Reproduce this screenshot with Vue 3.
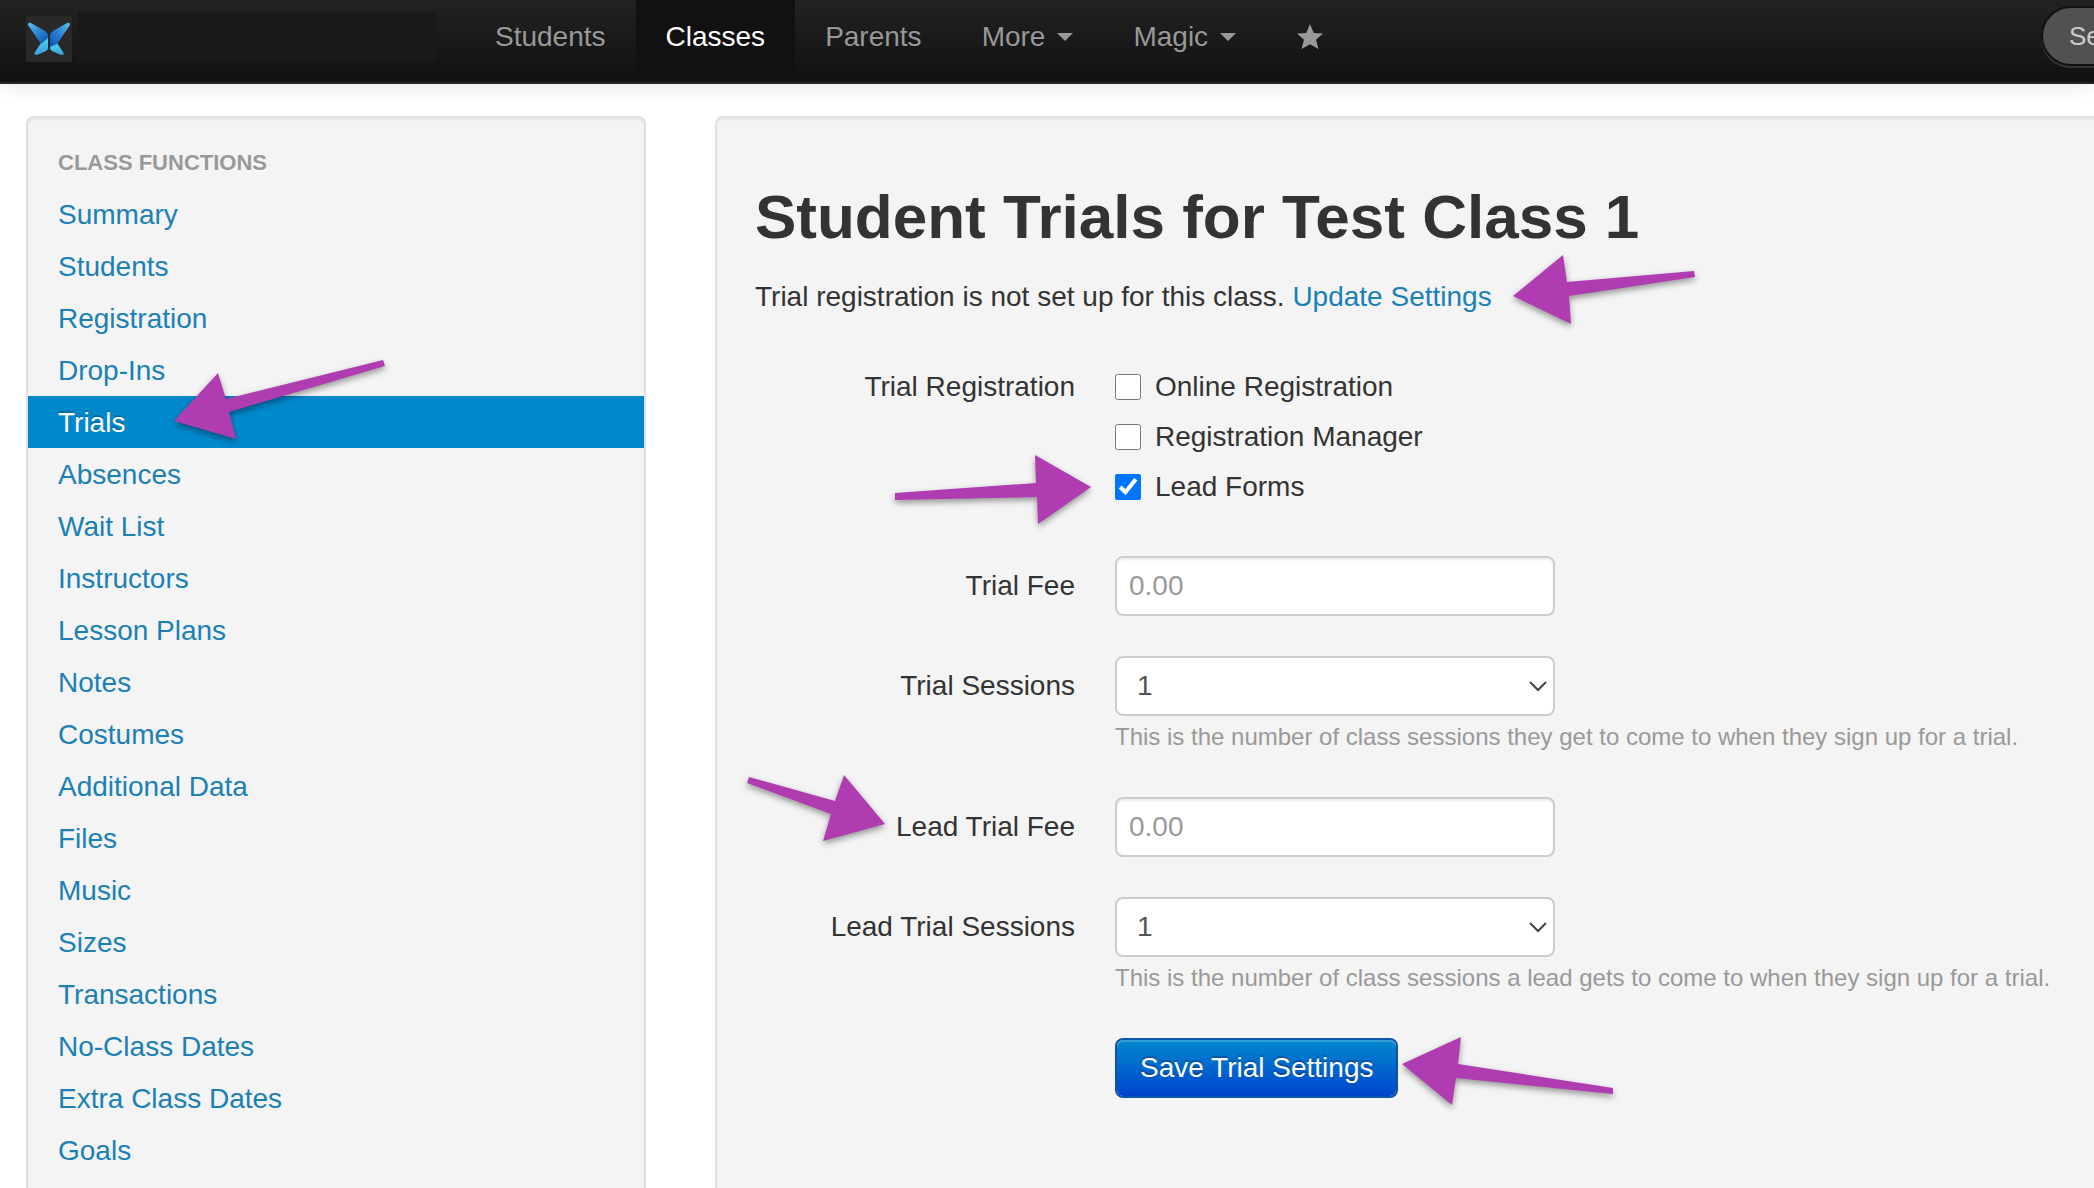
<template>
  <div class="page">
    <header class="navbar">
      <a class="brand" href="#" aria-label="Home">
        <svg class="logo" viewBox="0 0 46 46" aria-hidden="true">
          <defs>
            <linearGradient id="wing-l" x1="0" y1="0" x2="1" y2="1">
              <stop offset="0" stop-color="#5cc4ea" />
              <stop offset="0.5" stop-color="#2b82d0" />
              <stop offset="1" stop-color="#0a52b4" />
            </linearGradient>
            <linearGradient id="wing-r" x1="1" y1="0" x2="0" y2="1">
              <stop offset="0" stop-color="#5cc4ea" />
              <stop offset="0.5" stop-color="#2b82d0" />
              <stop offset="1" stop-color="#0a52b4" />
            </linearGradient>
            <linearGradient id="wing-b" x1="0" y1="0" x2="0" y2="1">
              <stop offset="0" stop-color="#4fd8ee" />
              <stop offset="1" stop-color="#3a9fdc" />
            </linearGradient>
          </defs>
          <path fill="url(#wing-b)" d="M22 21 L22 32 Q22 34 20 35 L11 39 Q7 39 9 36 L15 27 Z" />
          <path fill="url(#wing-b)" d="M31 27 L37 36 Q39 39 35 39 L26 35 Q24 34 24 32 L24 30 Z" />
          <path fill="url(#wing-l)" d="M2 9 Q2 6 5 7 L19 15 Q22 17 22 19 L22 22 L15 28 Z" />
          <path fill="url(#wing-r)" d="M44 9 Q44 6 41 7 L27 15 Q24 17 24 19 L24 31 L31 28 Z" />
        </svg>
        <span class="brand-name"></span>
      </a>
      <nav class="nav">
        <a
          v-for="link in navLinks"
          :key="link.label"
          href="#"
          :class="{ active: link.active }"
        >
          {{ link.label }}<span v-if="link.menu" class="caret"></span>
        </a>
        <a href="#" aria-label="Favorites">
          <svg class="star" viewBox="0 0 28 28" aria-hidden="true">
            <path
              d="M14 1 L17.8 10 L27 10.6 L20 16.8 L22.5 26 L14 21.2 L5.5 26 L8 16.8 L1 10.6 L10.2 10 Z"
            />
          </svg>
        </a>
      </nav>
      <input class="search" type="text" placeholder="Search" aria-label="Search" />
    </header>

    <div class="content">
      <aside class="well sidebar">
        <div class="nav-header">Class Functions</div>
        <a
          v-for="item in functions"
          :key="item"
          href="#"
          :class="{ active: item === 'Trials' }"
          >{{ item }}</a
        >
      </aside>

      <main class="well main">
        <h1>Student Trials for Test Class 1</h1>
        <p>
          Trial registration is not set up for this class.
          <a href="#">Update Settings</a>
        </p>
        <form @submit.prevent>
          <div class="group" role="group" aria-labelledby="registration">
            <span id="registration" class="label">Trial Registration</span>
            <div class="checks">
              <label v-for="opt in registration" :key="opt.label">
                <input v-model="opt.checked" type="checkbox" />
                {{ opt.label }}
              </label>
            </div>
          </div>
          <div v-for="field in fields" :key="field.id" class="group">
            <label class="label" :for="field.id">{{ field.label }}</label>
            <div v-if="field.help">
              <div class="select">
                <select :id="field.id">
                  <option v-for="n in 5" :key="n">{{ n }}</option>
                </select>
                <svg viewBox="0 0 20 12" aria-hidden="true">
                  <path d="M2 2 L10 10 L18 2" />
                </svg>
              </div>
              <div class="help">{{ field.help }}</div>
            </div>
            <input v-else :id="field.id" class="text" type="text" placeholder="0.00" />
          </div>
          <div class="group">
            <span></span>
            <button type="submit">Save Trial Settings</button>
          </div>
        </form>
      </main>
    </div>

    <svg class="arrows" width="2094" height="1188" aria-hidden="true">
      <polygon v-for="points in arrows" :key="points" :points="points" />
    </svg>
  </div>
</template>

<script setup>
import { ref } from "vue";

const navLinks = [
  { label: "Students" },
  { label: "Classes", active: true },
  { label: "Parents" },
  { label: "More", menu: true },
  { label: "Magic", menu: true },
];

const functions = [
  "Summary",
  "Students",
  "Registration",
  "Drop-Ins",
  "Trials",
  "Absences",
  "Wait List",
  "Instructors",
  "Lesson Plans",
  "Notes",
  "Costumes",
  "Additional Data",
  "Files",
  "Music",
  "Sizes",
  "Transactions",
  "No-Class Dates",
  "Extra Class Dates",
  "Goals",
];

const registration = ref([
  { label: "Online Registration", checked: false },
  { label: "Registration Manager", checked: false },
  { label: "Lead Forms", checked: true },
]);

const fields = [
  { id: "trial-fee", label: "Trial Fee" },
  {
    id: "trial-sessions",
    label: "Trial Sessions",
    help: "This is the number of class sessions they get to come to when they sign up for a trial.",
  },
  { id: "lead-trial-fee", label: "Lead Trial Fee" },
  {
    id: "lead-trial-sessions",
    label: "Lead Trial Sessions",
    help: "This is the number of class sessions a lead gets to come to when they sign up for a trial.",
  },
];

const arrows = [
  "174,421 218,373 226,399 383,360 385,366 229,412 236,439",
  "1513,296 1563,255 1567,282 1694,271 1695,277 1569,296 1571,324",
  "1091,487 1035,455 1036,483 895,493 895,500 1037,497 1038,524",
  "885,824 844,775 835,801 749,777 747,783 831,814 823,841",
  "1402,1064 1461,1037 1458,1064 1613,1088 1613,1094 1456,1078 1452,1105",
];
</script>

<style>
body {
  margin: 0;
}
</style>

<style scoped>
* {
  box-sizing: border-box;
}

.page {
  position: relative;
  height: 100vh;
  overflow: hidden;
  background: #fff;
  color: #333;
  font: 28px/40px "Liberation Sans", Arial, sans-serif;
}

a {
  color: #1a80b6;
  text-decoration: none;
}

input,
select,
button {
  margin: 0;
  font: inherit;
}

.navbar {
  display: flex;
  align-items: flex-start;
  height: 84px;
  padding-left: 26px;
  background: linear-gradient(#222, #111);
  border-bottom: 2px solid #252525;
  box-shadow: 0 2px 20px rgba(0, 0, 0, 0.1);
}

.brand {
  display: flex;
  gap: 6px;
  margin-right: 29px;
  padding-top: 12px;
}

.logo {
  width: 46px;
  height: 46px;
  margin-top: 4px;
  background: #292929;
}

.brand-name {
  width: 358px;
  height: 50px;
  background: #191919;
}

.nav {
  display: flex;
}

.nav a {
  display: flex;
  align-items: center;
  height: 80px;
  padding: 0 30px 6px;
  color: #999;
  text-shadow: 0 -1px 0 rgba(0, 0, 0, 0.25);
}

.nav a.active {
  background: #111;
  color: #fff;
}

.caret {
  margin-left: 12px;
  border: 8px solid transparent;
  border-top-color: #999;
  border-bottom: 0;
}

.star {
  width: 28px;
  height: 28px;
  fill: #999;
}

.search {
  flex: none;
  width: 400px;
  height: 60px;
  margin: 6px -347px 0 auto;
  padding: 0 26px;
  border: 2px solid #111;
  border-radius: 30px;
  background: #515151;
  box-shadow: 0 2px 0 rgba(255, 255, 255, 0.15);
  color: #fff;
  font-size: 26px;
}

.search::placeholder {
  color: #ccc;
}

.content {
  display: grid;
  grid-template-columns: 620px 1fr;
  gap: 69px;
  margin: 32px -20px 0 26px;
}

.well {
  min-height: 100vh;
  background: #f4f4f4;
  border: 2px solid #e0e0e0;
  border-radius: 8px;
  box-shadow: inset 0 2px 2px rgba(0, 0, 0, 0.05);
}

.sidebar {
  padding: 18px 0;
}

.sidebar a,
.nav-header {
  display: block;
  padding: 7px 30px 5px;
}

.nav-header {
  color: #999;
  font-size: 22px;
  font-weight: bold;
  text-transform: uppercase;
  text-shadow: 0 2px 0 rgba(255, 255, 255, 0.5);
}

.sidebar a.active {
  background: #0088cc;
  color: #fff;
  text-shadow: 0 -2px 0 rgba(0, 0, 0, 0.2);
}

.main {
  padding: 38px;
}

h1 {
  margin: 21px 0 20px;
  font-size: 62px;
  line-height: 80px;
}

p {
  margin: 0 0 40px;
}

.group {
  display: grid;
  grid-template-columns: 320px 1fr;
  justify-items: start;
  gap: 40px;
  margin-bottom: 40px;
}

.label {
  justify-self: end;
  padding-top: 10px;
}

.checks {
  padding-top: 10px;
}

.checks label {
  display: flex;
  align-items: center;
  gap: 14px;
  margin-bottom: 10px;
}

.checks label:last-child {
  margin-bottom: 9px;
}

.checks input {
  width: 26px;
  height: 26px;
  accent-color: #0075ff;
}

.text,
select {
  width: 440px;
  height: 60px;
  padding: 0 12px;
  border: 2px solid #ccc;
  border-radius: 8px;
  background: #fff;
  color: #555;
}

.text {
  box-shadow: inset 0 2px 2px rgba(0, 0, 0, 0.075);
}

.text::placeholder {
  color: #999;
}

.select {
  position: relative;
  width: 440px;
  height: 60px;
}

select {
  padding-left: 20px;
  appearance: none;
}

.select svg {
  position: absolute;
  top: 24px;
  right: 7px;
  width: 20px;
  height: 12px;
  fill: none;
  stroke: #444;
  stroke-width: 2;
  pointer-events: none;
}

.help {
  padding-top: 1px;
  color: #999;
  font-size: 24px;
}

button {
  height: 60px;
  padding: 0 23px;
  border: 2px solid #0a55a8;
  border-radius: 8px;
  background: linear-gradient(#0088cc, #0044cc) padding-box;
  box-shadow: inset 0 2px 0 rgba(255, 255, 255, 0.2);
  color: #fff;
  text-shadow: 0 -2px 0 rgba(0, 0, 0, 0.25);
}

.arrows {
  position: absolute;
  top: 0;
  left: 0;
  fill: #b03cb2;
  filter: drop-shadow(0 3px 3px rgba(0, 0, 0, 0.4));
  pointer-events: none;
}
</style>
